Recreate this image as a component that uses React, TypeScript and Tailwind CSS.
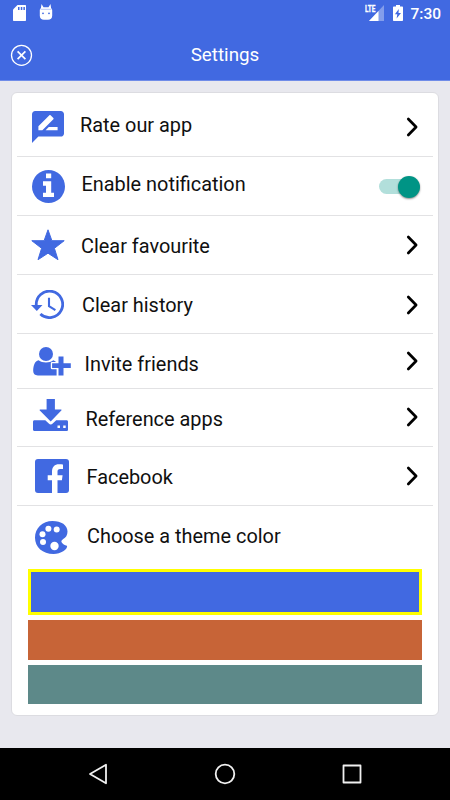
import type { ReactNode } from 'react'

const RateIcon = () => (
  <svg width="32" height="32" viewBox="2 2 20 20" fill="currentColor">
    <path d="M20 2H4c-1.1 0-1.99.9-1.99 2L2 22l4-4h14c1.1 0 2-.9 2-2V4c0-1.1-.9-2-2-2zM6 14v-2.47l6.88-6.88c.2-.2.51-.2.71 0l1.77 1.77c.2.2.2.51 0 .71L8.47 14H6zm12 0h-7.5l2-2H18v2z" />
  </svg>
)

const InfoIcon = () => (
  <svg width="33" height="33" viewBox="0 0 33 33">
    <circle cx="16.5" cy="16.5" r="16.5" fill="currentColor" />
    <path d="M14 3.5h5.2v4.8H14zM11 11.3h8.2v11.4H22v4.4H11v-4.4h3v-7h-3z" fill="#fff" />
  </svg>
)

const StarIcon = () => (
  <svg width="34" height="32" viewBox="0 0 34 32" fill="currentColor" stroke="currentColor" strokeLinejoin="round">
    <path d="M17 .8l3.9 10.9h12.3l-9.8 7.6 3.6 11.4L17 24.2 7 30.7l3.6-11.4L.8 11.7h12.3z" />
  </svg>
)

const HistoryIcon = () => (
  <svg width="33" height="29" viewBox="0 0 33 29" fill="none" stroke="currentColor">
    <path d="M5.3 15.5A13.2 13.2 0 1 1 9.4 24" strokeWidth="2.8" />
    <path d="M0 15h11.5l-5.7 6z" fill="currentColor" stroke="none" />
    <path d="M18 7.8v8.4l6.4 3.9" strokeWidth="2.1" />
  </svg>
)

const InviteIcon = () => (
  <svg width="38" height="29" viewBox="0 0 38 29" fill="currentColor">
    <circle cx="13" cy="7" r="7" />
    <path d="M5.6 13.3c2 1.4 4.5 2.2 7.4 2.2s5.3-.8 7.3-2.2c1.4.4 2.6 1.3 3.3 2.5V28.4H4.8C1.7 28.4.2 26.8.2 24c0-5.4 1.5-9.8 5.4-10.7z" />
    <path d="M25.5 9.5h5v6.8h7.3V21h-7.3v7.5h-5V21h-6.4v-4.7h6.4z" stroke="#fff" strokeWidth="2.6" paintOrder="stroke" strokeLinejoin="round" />
  </svg>
)

const DownloadIcon = () => (
  <svg width="35" height="32" viewBox="0 0 35 32" fill="currentColor">
    <path d="M13.6 0h8.3v10.4h5.9c.8 0 1 .7.5 1.2L17.7 22.5 6.8 11.6c-.5-.5-.2-1.2.6-1.2h6.2z" />
    <path
      fillRule="evenodd"
      d="M1.5 21.2h10.8l3.5 3.4c1.2 1.2 2.7 1.2 3.9 0l3.5-3.4h10.3c1 0 1.5.6 1.5 1.5v7.8c0 1-.6 1.5-1.5 1.5h-32C.6 32 0 31.4 0 30.5v-7.8c0-.9.6-1.5 1.5-1.5zM24.500 26.500v2.500H27v-2.500zM30.200 26.500v2.500h2.500v-2.500z"
    />
  </svg>
)

const FacebookIcon = () => (
  <svg width="34" height="34" viewBox="0 0 34 34">
    <rect width="34" height="34" rx="3" fill="currentColor" />
    <path d="M17 34V21.2h-4.3v-5H17v-3.6c0-4.8 2.6-7.4 7-7.4 1.8 0 3.2.1 4 .2V10h-2.8c-2 0-2.7 1-2.7 2.6v3.6h5.1l-.7 5h-4.4V34z" fill="#fff" />
  </svg>
)

const PaletteIcon = () => (
  <svg width="33" height="33" viewBox="0 0 33 33">
    <path
      d="M17.5 0C26.4 0 32.5 4.2 32.5 10.4c0 3.8-1.7 6-4.3 7.7-2.4 1.6-2.5 3-.1 5 1.4 1.1 3 1.3 4 2 .4 3.5-6.2 7.9-13.5 7.9C7.6 33 0 26 0 16.7 0 7 7.5 0 17.5 0z"
      fill="currentColor"
    />
    <g fill="#fff">
      <circle cx="13.4" cy="7.7" r="3" />
      <circle cx="21.7" cy="8.5" r="3" />
      <circle cx="7.5" cy="13.3" r="3" />
      <circle cx="8" cy="21.1" r="3" />
      <circle cx="19.5" cy="25" r="4.2" />
    </g>
  </svg>
)

const Chevron = () => (
  <svg width="12" height="20" viewBox="0 0 12 20" fill="none" stroke="#000" strokeWidth="2.7" strokeLinecap="round" strokeLinejoin="round">
    <path d="M2.3 2l7.8 8-7.8 8" />
  </svg>
)

const Toggle = () => (
  <div className="flex h-[23px] w-[42px] items-center rounded-full">
    <div className="h-[15px] w-8 rounded-full bg-[#b2dfdb]" />
    <div className="-ml-[13px] size-[22px] shrink-0 rounded-full bg-[#009485] shadow-[0_1px_2px_rgba(0,0,0,0.45)]" />
  </div>
)

type Row = {
  label: string
  icon: ReactNode
  row: string
  iconPos: string
  labelPos: string
  action?: ReactNode
  actionPos?: string
}

const rows: Row[] = [
  { label: 'Rate our app', icon: <RateIcon />, row: 'h-16 border-b', iconPos: 'ml-[15px] mt-[18px]', labelPos: 'pl-[63px] mt-[21px]', action: <Chevron />, actionPos: 'mt-6 mr-[15px]' },
  { label: 'Enable notification', icon: <InfoIcon />, row: 'h-[59px] border-b', iconPos: 'ml-[15px] mt-[13px]', labelPos: 'pl-[64.5px] mt-4', action: <Toggle />, actionPos: 'mt-[18px] mr-[12.5px]' },
  { label: 'Clear favourite', icon: <StarIcon />, row: 'h-[59px] border-b', iconPos: 'ml-[14px] mt-[13px]', labelPos: 'pl-16 mt-[19px]', action: <Chevron />, actionPos: 'mt-[19px] mr-[15px]' },
  { label: 'Clear history', icon: <HistoryIcon />, row: 'h-[59px] border-b', iconPos: 'ml-[14px] mt-[15px]', labelPos: 'pl-[65px] mt-[19px]', action: <Chevron />, actionPos: 'mt-5 mr-[15px]' },
  { label: 'Invite friends', icon: <InviteIcon />, row: 'h-[55px] border-b', iconPos: 'ml-4 mt-[13px]', labelPos: 'pl-[67.5px] mt-[19px]', action: <Chevron />, actionPos: 'mt-[17px] mr-[15px]' },
  { label: 'Reference apps', icon: <DownloadIcon />, row: 'h-[58px] border-b', iconPos: 'ml-4 mt-[10px]', labelPos: 'pl-[68.5px] mt-[19px]', action: <Chevron />, actionPos: 'mt-[18px] mr-[15px]' },
  { label: 'Facebook', icon: <FacebookIcon />, row: 'h-[59px] border-b', iconPos: 'ml-[18px] mt-3', labelPos: 'pl-[69.5px] mt-[19px]', action: <Chevron />, actionPos: 'mt-[19px] mr-[15px]' },
  { label: 'Choose a theme color', icon: <PaletteIcon />, row: 'h-[63px]', iconPos: 'ml-[18px] mt-[15px]', labelPos: 'pl-[70px] mt-[19px]' }
]

function SettingsRow({ label, icon, row, iconPos, labelPos, action, actionPos }: Row) {
  return (
    <div className={`grid grid-cols-[1fr_auto] items-start border-[#e2e2e4] ${row}`}>
      <div className="grid items-start">
        <div className={`col-start-1 row-start-1 text-[#4169e1] ${iconPos}`}>{icon}</div>
        <div className={`col-start-1 row-start-1 text-[19.9px] leading-6 whitespace-nowrap text-[#101010] ${labelPos}`}>{label}</div>
      </div>
      {action && <div className={actionPos}>{action}</div>}
    </div>
  )
}

function StatusBar() {
  return (
    <div className="flex h-[25px] items-start text-white">
      <svg className="mt-[5px] ml-[13px]" width="13" height="16" viewBox="0 0 13 16">
        <path d="M4.5 0H12c.6 0 1 .4 1 1v14c0 .6-.4 1-1 1H1c-.6 0-1-.4-1-1V4.5z" fill="#fff" />
        <path d="M5 2h1.500v3H5zM7.800 2h1.500v3H7.800zM10.400 2h1.500v3h-1.500z" fill="#4169e1" />
      </svg>
      <svg className="mt-1 ml-[13px]" width="14" height="16" viewBox="0 0 14 16">
        <path d="M2.5 0l2 3.2h5L11.5 0l.6 4.200c.8.5 1.100 1.200 1.100 2v5.500c0 2.500-1.700 4-4.200 4H5c-2.500 0-4.200-1.500-4.200-4V6.200c0-.8.3-1.500 1.100-2z" fill="#fff" />
        <path d="M1.5 5.300h11" stroke="#b9c7f5" strokeWidth="1" />
        <circle cx="4" cy="9.300" r=".9" fill="#4169e1" />
        <circle cx="10" cy="9.300" r=".9" fill="#4169e1" />
      </svg>
      <svg className="mt-1 ml-auto" width="20" height="17" viewBox="0 0 20 17">
        <path d="M19 1v16H4z" fill="#fff" fillOpacity=".35" />
        <path d="M13.500 7v10H4z" fill="#fff" />
        <text x="0" y="8.300" textLength="10.500" lengthAdjust="spacingAndGlyphs" fontSize="9.500" fontWeight="700" fill="#fff" stroke="#fff" strokeWidth=".3">LTE</text>
      </svg>
      <svg className="mt-[5px] ml-2" width="10" height="16" viewBox="0 0 10 16">
        <path d="M3 0h4v1.500h2c.6 0 1 .4 1 1V15c0 .6-.4 1-1 1H1c-.6 0-1-.4-1-1V2.500c0-.6.4-1 1-1h2z" fill="#fff" />
        <path d="M5.800 4L1.900 9.300h2.400L3.600 13.500 8 8H5.500z" fill="#4169e1" />
      </svg>
      <span className="mt-[3px] mr-[9px] ml-[7px] text-[15.5px] leading-[22px] font-medium">7:30</span>
    </div>
  )
}

export default function App() {
  return (
    <div className="flex h-[800px] w-[450px] flex-col overflow-hidden bg-[#e8e8ee] font-[Roboto,sans-serif]">
      <header className="h-[81px] shrink-0 border-b border-[#6f8ce8] bg-[#4169e1]">
        <StatusBar />
        <div className="grid h-[55px] grid-cols-[50px_1fr_50px] items-start text-white">
          <svg className="mt-[19px] ml-[10px]" width="23" height="23" viewBox="0 0 23 23" fill="none" stroke="#fff">
            <circle cx="11.5" cy="11.3" r="10" strokeWidth="1.3" />
            <path d="M7.6 7.4l7.8 7.8M15.4 7.4l-7.8 7.8" strokeWidth="1.7" />
          </svg>
          <h1 className="mt-[18px] text-center text-[18.8px] leading-6">Settings</h1>
        </div>
      </header>

      <main className="mx-[11px] mt-[11px] h-[624px] shrink-0 rounded-md border border-[#dcdce1] bg-white px-[5px]">
        {rows.map((row) => (
          <SettingsRow key={row.label} {...row} />
        ))}
        <div className="flex flex-col px-[11px]">
          <div className="h-[46px] border-[3px] border-[#ffff00] bg-[#4169e1]" />
          <div className="mt-[5px] h-10 bg-[#c76437]" />
          <div className="mt-[5px] h-[39px] bg-[#5d8989]" />
        </div>
      </main>

      <nav className="mt-auto grid h-[52px] shrink-0 grid-cols-[98px_127px_127px_98px] bg-black">
        <svg className="mt-[15px] ml-[88px]" width="20" height="22" viewBox="0 0 20 22" fill="none" stroke="#f0f0f0" strokeWidth="1.8" strokeLinejoin="round">
          <path d="M18 1.7v18.6L2 11z" />
        </svg>
        <svg className="mt-[15px] ml-[116px]" width="22" height="22" viewBox="0 0 22 22" fill="none" stroke="#f0f0f0" strokeWidth="1.8">
          <circle cx="11" cy="11" r="9.3" />
        </svg>
        <svg className="mt-[15px] ml-[116px]" width="22" height="22" viewBox="0 0 22 22" fill="none" stroke="#f0f0f0" strokeWidth="1.8" strokeLinejoin="round">
          <path d="M2.5 2.5h17v17h-17z" />
        </svg>
      </nav>
    </div>
  )
}
